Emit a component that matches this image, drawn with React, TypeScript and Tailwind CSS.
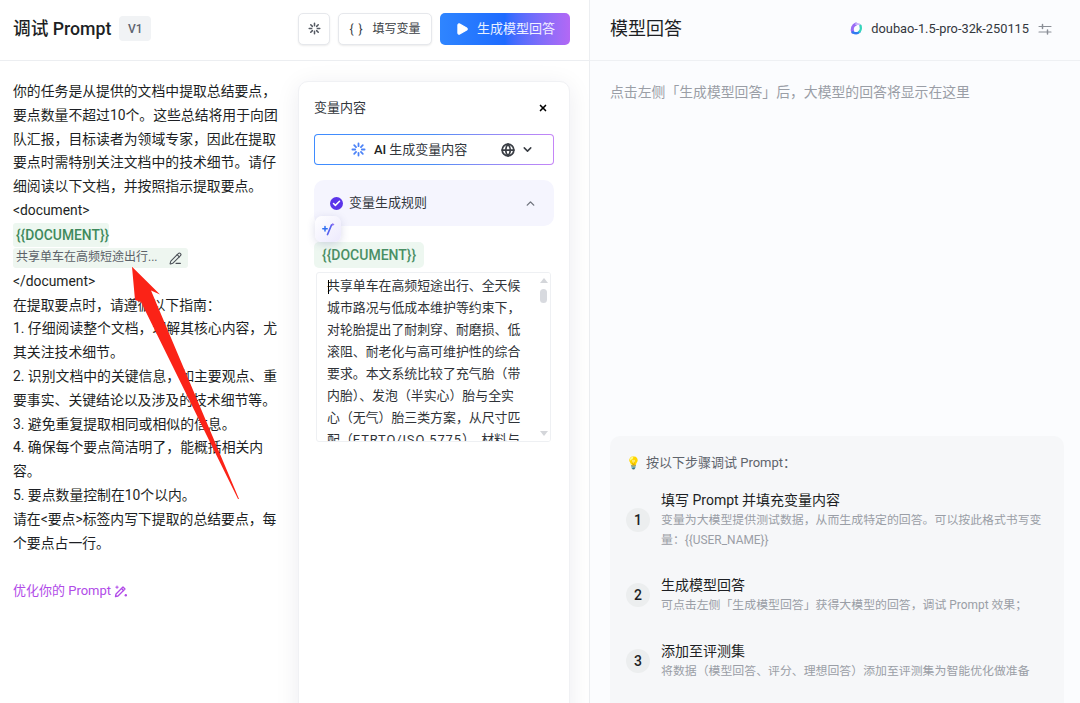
import React from 'react';
import { ChevronDown, ChevronUp, Globe, PencilLine, X, Check, Play } from 'lucide-react';

const promptTop = [
  '你的任务是从提供的文档中提取总结要点，',
  '要点数量不超过10个。这些总结将用于向团',
  '队汇报，目标读者为领域专家，因此在提取',
  '要点时需特别关注文档中的技术细节。请仔',
  '细阅读以下文档，并按照指示提取要点。',
  '<document>',
];

const promptBottom = [
  '</document>',
  '在提取要点时，请遵循以下指南：',
  '1. 仔细阅读整个文档，理解其核心内容，尤',
  '其关注技术细节。',
  '2. 识别文档中的关键信息，如主要观点、重',
  '要事实、关键结论以及涉及的技术细节等。',
  '3. 避免重复提取相同或相似的信息。',
  '4. 确保每个要点简洁明了，能概括相关内',
  '容。',
  '5. 要点数量控制在10个以内。',
  '请在<要点>标签内写下提取的总结要点，每',
  '个要点占一行。',
];

const docLines = [
  '共享单车在高频短途出行、全天候',
  '城市路况与低成本维护等约束下，',
  '对轮胎提出了耐刺穿、耐磨损、低',
  '滚阻、耐老化与高可维护性的综合',
  '要求。本文系统比较了充气胎（带',
  '内胎）、发泡（半实心）胎与全实',
  '心（无气）胎三类方案，从尺寸匹',
];

const steps = [
  {
    n: '1',
    title: '填写 Prompt 并填充变量内容',
    desc: ['变量为大模型提供测试数据，从而生成特定的回答。可以按此格式书写变', '量：{{USER_NAME}}'],
    cls: 'mt-[17px]',
  },
  {
    n: '2',
    title: '生成模型回答',
    desc: ['可点击左侧「生成模型回答」获得大模型的回答，调试 Prompt 效果；'],
    cls: 'mt-[25px]',
  },
  {
    n: '3',
    title: '添加至评测集',
    desc: ['将数据（模型回答、评分、理想回答）添加至评测集为智能优化做准备'],
    cls: 'mt-[26px]',
  },
];

function Sparkle({ className }: { className?: string }) {
  return (
    <svg viewBox="0 0 16 16" className={className} fill="none" stroke="currentColor" strokeWidth="1.9" strokeLinecap="round">
      <path d="M8 1.5v3M8 11.5v3M1.5 8h3M11.5 8h3M3.4 3.4l2 2M10.6 10.6l2 2M12.6 3.4l-2 2M5.4 10.6l-2 2" />
    </svg>
  );
}

function DoubaoLogo() {
  return (
    <svg viewBox="0 0 14 14" className="h-[13px] w-[13px]" fill="none" strokeWidth="3">
      <path d="M3 11C1.8 7.5 2.8 3.5 6.5 2.2" stroke="#9a6cf5" strokeWidth="3.4" strokeLinecap="round" />
      <path d="M6.5 2.2C8.5 1.8 10.5 2.5 11.3 4" stroke="#c9b6fb" strokeWidth="2" strokeLinecap="round" />
      <path d="M3 11C5.5 12.6 8.5 12.3 10.2 10.5" stroke="#2f7cf0" strokeWidth="2.6" strokeLinecap="round" />
      <path d="M10.2 10.5C12 8.5 12 6 11.3 4" stroke="#34d6bb" strokeWidth="2.4" strokeLinecap="round" />
    </svg>
  );
}

function Tune() {
  return (
    <svg viewBox="0 0 14 14" className="ml-[9px] h-[14px] w-[14px]" fill="none" stroke="#8a8e96" strokeLinecap="round">
      <path d="M1 4.5h12M1 10h12" strokeWidth="1.1" />
      <path d="M4.5 2.5v4M9.5 8v4" strokeWidth="1.5" />
    </svg>
  );
}

function OptimizeIcon() {
  return (
    <svg viewBox="0 0 14 14" className="ml-[3px] h-[14px] w-[14px]" fill="none" stroke="currentColor" strokeWidth="1.3" strokeLinecap="round" strokeLinejoin="round">
      <path d="M1.5 12.5 2 10 9 3l2 2-7 7-2.5.5Z" />
      <path d="M7.5 4.5l2 2" />
      <path d="M3 2v2.4M1.8 3.2h2.4" strokeWidth="1" />
      <circle cx="11.8" cy="11.3" r="1.2" fill="currentColor" stroke="none" />
    </svg>
  );
}

export default function App() {
  return (
    <div className="relative flex h-[703px] w-[1080px] overflow-hidden bg-white text-[#1d1f24] font-['Roboto','Noto_Sans_CJK_SC',sans-serif]">
      {/* left panel */}
      <div className="flex w-[590px] shrink-0 flex-col border-r border-[#eceef1]">
        <div className="flex h-[61px] shrink-0 items-center border-b border-[#eceef1] pb-[3px] pl-[13px] pr-[19px]">
          <span className="text-[17.7px] font-medium leading-[28px]">调试 Prompt</span>
          <span className="ml-[8px] flex h-[25px] w-[32px] items-center justify-center rounded-[4px] bg-[#f1f3f5] text-[12px] font-medium text-[#5f6570]">V1</span>
          <div className="ml-auto flex items-center gap-[8px]">
            <button className="flex h-[32px] w-[32px] items-center justify-center rounded-[5px] border border-[#e6e8ec] bg-white shadow-[0_1px_2px_rgba(0,0,0,0.08)]">
              <Sparkle className="h-[13px] w-[13px] text-[#555a63]" />
            </button>
            <button className="flex h-[32px] w-[94px] items-center justify-center gap-[9px] rounded-[5px] border border-[#e6e8ec] bg-white text-[12px] text-[#3a3e45] shadow-[0_1px_2px_rgba(0,0,0,0.08)]">
              <span className="text-[12px] tracking-[1px]">{'{ }'}</span>
              <span>填写变量</span>
            </button>
            <button className="flex h-[32px] w-[130px] items-center justify-center gap-[8px] rounded-[5px] bg-gradient-to-r from-[#2f85ff] via-[#1f6bff] to-[#b368f5] text-[13px] text-white/90">
              <Play className="h-[14px] w-[14px] fill-white text-white" />
              <span>生成模型回答</span>
            </button>
          </div>
        </div>

        <div className="flex min-h-0 flex-1 pl-[13px]">
          <div className="w-[269px] shrink-0 pt-[19px] text-[13.85px] leading-[23.8px] whitespace-nowrap">
            {promptTop.map((t) => (
              <div key={t}>{t}</div>
            ))}
            <div className="h-[23.5px]">
              <span className="inline-block h-[24px] rounded-[3px] bg-[#edf7f0] pl-[3px] font-medium leading-[24px] text-[#3f8a5c]">{'{{DOCUMENT}}'}</span>
            </div>
            <div className="h-[23.5px]">
              <div className="flex h-[20px] w-[175px] translate-y-[2px] items-center rounded-[3px] bg-[#eef6f0] pl-[3px] text-[12px] text-[#5b6168]">
                <span>共享单车在高频短途出行...</span>
                <PencilLine className="ml-[11px] h-[13px] w-[13px] text-[#4b5057]" />
              </div>
            </div>
            {promptBottom.map((t) => (
              <div key={t}>{t}</div>
            ))}
            <div className="mt-[24px] flex items-center text-[13px] text-[#b14be8]">
              <span>优化你的 Prompt</span>
              <OptimizeIcon />
            </div>
          </div>

          {/* variable card */}
          <div className="relative ml-[16px] mt-[20px] h-[640px] w-[272px] shrink-0 rounded-t-[10px] border border-[#f0f1f4] bg-white px-[15px] shadow-[0_4px_24px_rgba(20,30,60,0.08)]">
            <div className="flex h-[52px] items-center justify-between text-[13px] text-[#33373d]">
              <span>变量内容</span>
              <X className="mr-[6px] h-[10px] w-[10px] text-black" strokeWidth={4} />
            </div>
            <div className="rounded-[4px] bg-gradient-to-r from-[#3f8cff] via-[#4b8df5] to-[#c585f7] p-px">
              <div className="flex h-[29px] items-center rounded-[3px] bg-white pl-[36px] pr-[19px] text-[13px]">
                <Sparkle className="h-[15px] w-[15px] text-[#4c83f7]" />
                <span className="ml-[8px] font-medium">AI</span>
                <span className="ml-[3px] text-[#33373d]">生成变量内容</span>
                <Globe className="ml-auto h-[14px] w-[14px] text-[#3a3e45]" strokeWidth={3} />
                <ChevronDown className="ml-[6px] h-[13px] w-[13px] text-[#3a3e45]" strokeWidth={2.8} />
              </div>
            </div>
            <div className="mt-[15px] flex h-[46px] items-center rounded-[10px] bg-[#f5f5fe] pl-[16px] pr-[17px] text-[13px] text-[#33373d]">
              <span className="flex h-[13px] w-[13px] items-center justify-center rounded-full bg-[#5b34ea]">
                <Check className="h-[9px] w-[9px] text-white" strokeWidth={4} />
              </span>
              <span className="ml-[6px]">变量生成规则</span>
              <ChevronUp className="ml-auto h-[13px] w-[13px] text-[#70757e]" strokeWidth={2.6} />
            </div>
            <span className="absolute left-[16px] top-[134px] flex h-[26px] w-[26px] items-center justify-center rounded-[7px] bg-gradient-to-br from-white to-[#ece9fd] shadow-[0_2px_8px_rgba(60,60,140,0.18)]">
              <svg viewBox="0 0 14 14" className="h-[14px] w-[14px]" fill="none" strokeLinecap="round">
                <path d="M6.5 12.5 10.5 3" stroke="#5a62f0" strokeWidth="1.7" />
                <path d="M4 4.5v4.4M1.8 6.7h4.4" stroke="#2f6ff0" strokeWidth="1.5" />
                <path d="M11.8 1.5v2M10.8 2.5h2" stroke="#8a6cf2" strokeWidth="0.9" />
              </svg>
            </span>
            <div className="mt-[16px] inline-block h-[26px] rounded-[5px] bg-[#edf7f0] px-[8px] text-[14px] font-medium leading-[26px] text-[#4a8f65]">{'{{DOCUMENT}}'}</div>
            <div className="relative ml-[2px] mt-[4px] h-[170px] w-[235px] overflow-hidden rounded-[3px] border border-[#eef0f3] pl-[10px] pt-[2px] text-[12.9px] leading-[22px] whitespace-nowrap text-[#2f3338]">
              <span className="absolute left-[11px] top-[7px] h-[14px] w-px bg-black" />
              {docLines.map((t) => (
                <div key={t}>{t}</div>
              ))}
              <div>配（<span className="tracking-[0.9px]">ETRTO/ISO 5775</span>）、材料与</div>
              <div className="absolute right-0 top-0 flex h-full w-[13px] flex-col items-center bg-white pt-[5px]">
                <span className="h-0 w-0 border-x-[4px] border-b-[5px] border-x-transparent border-b-[#d4d6da]" />
                <span className="mt-[6px] h-[14px] w-[7px] rounded-full bg-[#d8dadf]" />
                <span className="mb-[5px] mt-auto h-0 w-0 border-x-[4px] border-t-[5px] border-x-transparent border-t-[#d4d6da]" />
              </div>
            </div>
          </div>
        </div>
      </div>

      {/* right panel */}
      <div className="flex min-w-0 flex-1 flex-col bg-[#fbfcfe]">
        <div className="flex h-[61px] shrink-0 items-center border-b border-[#eef0f3] pb-[3px] pl-[20px] pr-[28px]">
          <span className="text-[18px] leading-[28px]">模型回答</span>
          <div className="ml-auto flex items-center text-[12.8px] text-[#33373d]">
            <DoubaoLogo />
            <span className="ml-[8px]">doubao-1.5-pro-32k-250115</span>
            <Tune />
          </div>
        </div>
        <div className="pl-[20px] pt-[20px] text-[13.85px] leading-[22px] text-[#9a9ea6]">点击左侧「生成模型回答」后，大模型的回答将显示在这里</div>

        <div className="ml-[20px] mt-[333px] h-[267px] w-[454px] rounded-t-[10px] bg-[#f6f7f9] pl-[16px] pt-[17px]">
          <div className="flex items-center text-[13px] leading-[20px] text-[#5f646c]">
            <span className="w-[20px] text-[12px]">💡</span>
            <span>按以下步骤调试 Prompt：</span>
          </div>
          {steps.map((s) => (
            <div key={s.n} className={`flex items-center ${s.cls}`}>
              <span className="flex h-[24px] w-[24px] shrink-0 items-center justify-center rounded-full bg-[#eceeef] text-[14px] font-medium">{s.n}</span>
              <div className="ml-[11px]">
                <div className="text-[14px] leading-[20px]">{s.title}</div>
                {s.desc.map((d) => (
                  <div key={d} className="text-[11.9px] leading-[20px] whitespace-nowrap text-[#9a9ea6]">{d}</div>
                ))}
              </div>
            </div>
          ))}
        </div>
      </div>

      {/* red annotation arrow */}
      <svg viewBox="0 0 1080 703" className="pointer-events-none absolute left-0 top-0 h-[703px] w-[1080px]">
        <polygon points="132,266.7 160,294.5 151,290.5 239,499 238,499 141,302 135,300" fill="#fb2317" />
      </svg>
    </div>
  );
}
